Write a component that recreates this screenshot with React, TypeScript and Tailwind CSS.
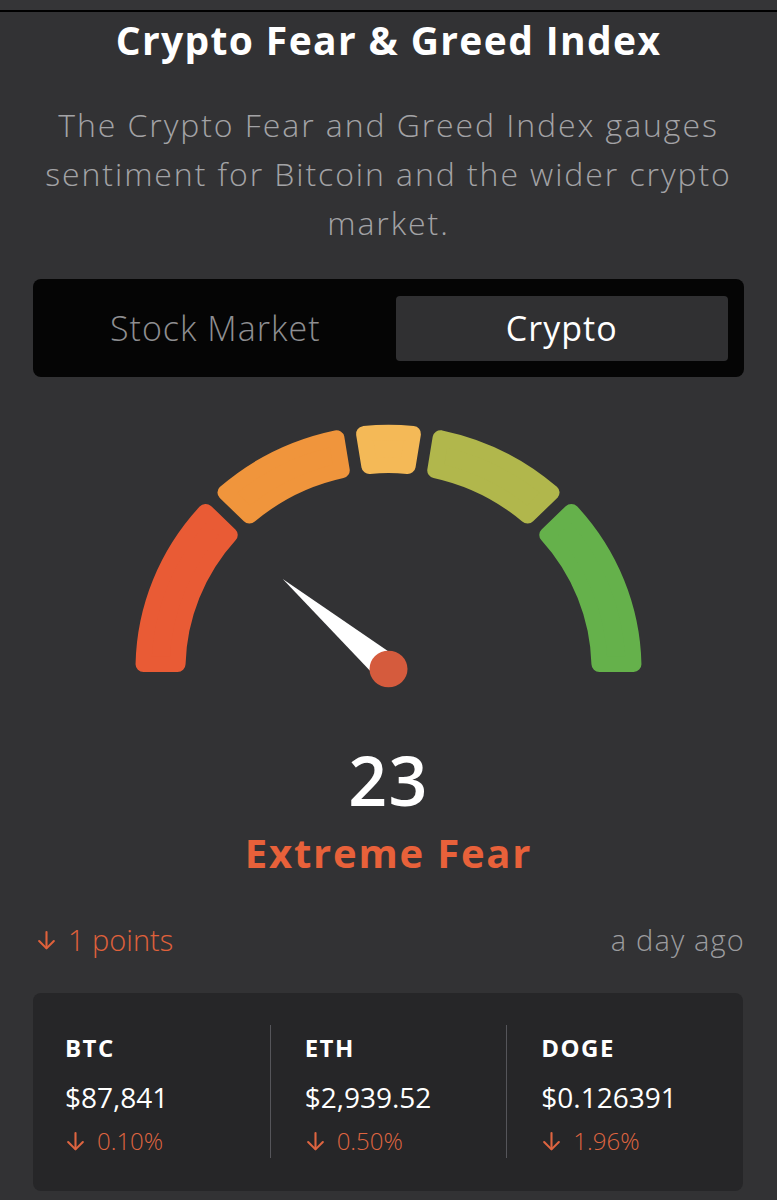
import React from "react";

const RO = 253;
const RI = 203;
const RC = 8;

function pt(r: number, a: number): string {
  const rad = (a * Math.PI) / 180;
  return `${(r * Math.cos(rad)).toFixed(2)} ${(-r * Math.sin(rad)).toFixed(2)}`;
}

function deg(x: number) {
  return (x * 180) / Math.PI;
}

function segPath(a1: number, a2: number, d1: number, d2: number) {
  const ro = RO - RC;
  const ri = RI + RC;
  const p1 = pt(ro, a1 - deg(d1 / ro));
  const p2 = pt(ro, a2 + deg(d2 / ro));
  const p3 = pt(ri, a2 + deg(d2 / ri));
  const p4 = pt(ri, a1 - deg(d1 / ri));
  return `M ${p1} A ${ro} ${ro} 0 0 1 ${p2} L ${p3} A ${ri} ${ri} 0 0 0 ${p4} Z`;
}

const G = 14;
const E = 5;
const segments = [
  { a1: 180, a2: 135, d1: E, d2: G, c: "#e95b35" },
  { a1: 135, a2: 99, d1: G, d2: G, c: "#f0953c" },
  { a1: 99, a2: 81, d1: G, d2: G, c: "#f4b957" },
  { a1: 81, a2: 45, d1: G, d2: G, c: "#b1b74c" },
  { a1: 45, a2: 0, d1: G, d2: E, c: "#65b14b" },
];

function Gauge() {
  const na = 138.6;
  const tip = pt(141, na);
  const b1 = pt(15, na - 90);
  const b2 = pt(15, na + 90);
  return (
    <svg className="block h-[300px] w-full" viewBox="0 0 777 300">
      <g transform="translate(388.5 259) scale(1 0.965)">
        {segments.map((s, i) => (
          <path
            key={i}
            d={segPath(s.a1, s.a2, s.d1, s.d2)}
            fill={s.c}
            stroke={s.c}
            strokeWidth={RC * 2}
            strokeLinejoin="round"
          />
        ))}
        <polygon points={`${tip} ${b1} ${b2}`} fill="#ffffff" />
        <circle cx="0" cy="0" r="19" fill="#d55b3d" />
      </g>
    </svg>
  );
}

function DownArrow({ className }: { className?: string }) {
  return (
    <svg className={className} viewBox="0 0 20 20" fill="none" stroke="currentColor" strokeWidth="2" strokeLinecap="round" strokeLinejoin="round">
      <path d="M10 2 V17" />
      <path d="M3 10.5 L10 17.5 L17 10.5" />
    </svg>
  );
}

function Coin({ sym, price, pct, first }: { sym: string; price: string; pct: string; first?: boolean }) {
  return (
    <div className={`h-[133px] ${first ? "pl-[32px]" : "pl-[34px] border-l border-[#55555a]"}`}>
      <div className="mt-[7px] text-[24px] leading-[32px] font-bold text-white tracking-[0.06em]">{sym}</div>
      <div className="mt-[15px] text-[28px] leading-[36px] font-normal text-white">{price}</div>
      <div className="mt-[11px] flex items-center text-[24px] leading-[30px] font-light text-[#de6440]">
        <DownArrow className="mr-[11px] h-[21px] w-[21px]" />
        <span>{pct}</span>
      </div>
    </div>
  );
}

export default function App() {
  return (
    <div className="h-[1200px] w-full overflow-hidden bg-[#323234] font-['Open_Sans',sans-serif]">
      <div className="h-[10px] bg-[#353537]" />
      <div className="h-[2px] bg-black" />
      <h1 className="mt-[3px] text-center text-[39px] leading-[50px] font-bold tracking-[0.035em] text-white">
        Crypto Fear &amp; Greed Index
      </h1>
      <p className="mt-[35px] text-center text-[32px] leading-[49px] font-light tracking-[0.06em] text-[#a3a3a6]">
        The Crypto Fear and Greed Index gauges
        <br />
        sentiment for Bitcoin and the wider crypto
        <br />
        market.
      </p>
      <div className="mx-[33px] mt-[32px] grid h-[98px] grid-cols-2 gap-[14px] rounded-[8px] bg-[#050505] px-[16px] pt-[17px] pb-[16px]">
        <div className="flex items-center justify-center text-[34px] font-light tracking-[0.03em] text-[#8e8e91]">Stock Market</div>
        <div className="flex items-center justify-center rounded-[4px] bg-[#303032] text-[34px] font-normal tracking-[0.03em] text-white">
          Crypto
        </div>
      </div>
      <div className="mt-[33px]">
        <Gauge />
      </div>
      <div className="mt-[35px] text-center text-[68px] leading-[70px] font-semibold tracking-[0.02em] text-white">23</div>
      <div className="mt-[13px] text-center text-[40px] leading-[50px] font-bold tracking-[0.045em] text-[#e8613a]">
        Extreme Fear
      </div>
      <div className="mt-[44px] flex items-center justify-between pl-[36px] pr-[32px] text-[29px] leading-[36px] font-light">
        <div className="flex items-center text-[#e0613b]">
          <DownArrow className="mr-[11px] h-[21px] w-[21px]" />
          <span>1 points</span>
        </div>
        <div className="text-[#9c9c9f] tracking-[0.04em]">a day ago</div>
      </div>
      <div className="mt-[35px] mr-[34px] ml-[33px] grid grid-cols-3 rounded-[8px] bg-[#262628] pt-[32px] pb-[33px]">
        <Coin sym="BTC" price="$87,841" pct="0.10%" first />
        <Coin sym="ETH" price="$2,939.52" pct="0.50%" />
        <Coin sym="DOGE" price="$0.126391" pct="1.96%" />
      </div>
    </div>
  );
}
